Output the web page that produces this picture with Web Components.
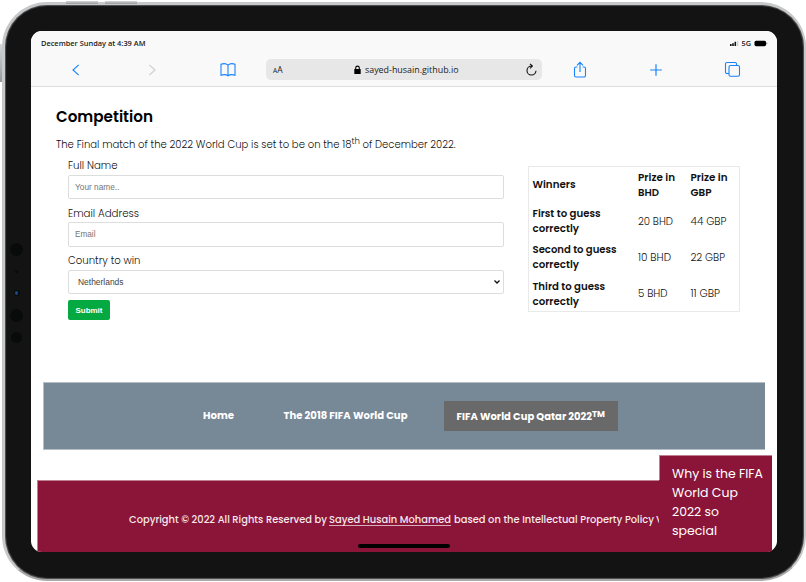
<!DOCTYPE html>
<html lang="en"><head><meta charset="utf-8"><title>Competition</title>
<style>
html,body{margin:0;height:100%;overflow:hidden;background:#fff}
body{font-family:Poppins,Inter,"Open Sans",sans-serif;color:#333}
</style></head><body>
<tablet-frame>
  <browser-bar></browser-bar>
  <competition-page></competition-page>
</tablet-frame>
<script>
const define=(name,html,after)=>customElements.define(name,class extends HTMLElement{
  connectedCallback(){
    if(this.shadowRoot)return;
    const t=document.createElement('template');t.innerHTML=html;
    this.attachShadow({mode:'open'}).append(t.content.cloneNode(true));
    if(after)after(this);
  }
});

/* A single line of text sized, then tracked, to the width given in its w attribute. */
define('fit-text',`<style>:host{display:inline-block;white-space:pre;line-height:inherit}span{display:inline-block}</style><span><slot></slot></span>`,el=>{
  const w=+el.getAttribute('w'),s=el.shadowRoot.querySelector('span');
  requestAnimationFrame(()=>{
    const n=el.textContent.length,size=parseFloat(getComputedStyle(s).fontSize);
    const k=Math.max(.92,Math.min(1.08,w/s.getBoundingClientRect().width));
    s.style.fontSize=size*k+'px';
    if(n>1)s.style.letterSpacing=((w-s.getBoundingClientRect().width)/n)+'px';
    el.style.width=w+'px';
  });
});

define('tablet-frame',`<style>
:host{display:block;position:relative;width:806px;height:582px;overflow:hidden}
.key{position:absolute;background:linear-gradient(#d5d6d8,#97999b)}
.case{box-sizing:border-box;margin:2px 0 0 2px;width:804px;height:579px;border-radius:45px;background:#131313;border:3px solid #c6c8ca;border-right-width:2px;border-bottom-width:2px;border-bottom-color:#aaa;padding:26px 27px 27px 26px;box-shadow:inset 0 0 1px 1px #555}
.screen{width:746px;height:521px;border-radius:11px;background:#fff;overflow:hidden;position:relative;display:flex;flex-direction:column}
.dot{position:absolute;border-radius:50%;background:#090b0b}
.home{position:absolute;left:358px;top:544px;width:92px;height:4px;border-radius:2px;background:#000}
</style>
<i class="key" style="left:66px;top:1px;width:32px;height:3px"></i><i class="key" style="left:105px;top:1px;width:32px;height:3px"></i>
<i class="key" style="left:0;top:44px;width:2px;height:38px"></i>
<div class="case"><div class="screen"><slot></slot></div></div>
<i class="dot" style="left:10px;top:243px;width:13px;height:13px"></i>
<i class="dot" style="left:15px;top:270px;width:3px;height:3px"></i>
<i class="dot" style="left:14px;top:290px;width:6px;height:6px"></i>
<i class="dot" style="left:15px;top:291px;width:3px;height:4px;background:#174a86"></i>
<i class="dot" style="left:10px;top:309px;width:13px;height:13px"></i>
<i class="dot" style="left:11px;top:332px;width:11px;height:11px"></i>
<i class="home"></i>`);

define('browser-bar',`<style>
:host{display:block;height:55px;flex:none;background:#f9f9f9;border-bottom:1px solid #dedede;font-family:"Open Sans","Noto Sans",sans-serif}
.status{display:flex;justify-content:space-between;align-items:center;height:25px;padding:0 9px 0 10px;font-size:7.400px;font-weight:600;color:#222}
.status fit-text{margin-top:-1px}
.right{display:flex;align-items:center;gap:3px}
.tools{display:grid;grid-template-columns:76px 76px 78px 276px 76px 76px 76px;height:27px;align-items:center;padding-left:6px}
.tools>svg{justify-self:center}
svg{display:block;fill:none;stroke:#1683fb;stroke-width:1.1}
.url{box-sizing:border-box;width:276px;height:21px;margin-left:-1px;border-radius:5px;background:#e7e7e7;display:flex;align-items:center;padding:0 4px 0 7px;color:#222;font-size:9px}
.aa{font-size:8.5px;width:81px}.aa small{font-size:6.5px}
.url fit-text{margin-left:4px;flex:1}
</style>
<div class="status"><fit-text w="104.5">December Sunday at 4:39 AM</fit-text>
<div class="right"><svg width="9" height="7" style="stroke:none;fill:#111"><path d="M0 4h1.6v2H0zM2.2 3.2h1.6V6H2.2zM4.5 1.8h1.6V6H4.5z"/><path d="M7 1h1.3v5H7z" fill="#ccc"/></svg><fit-text w="9.5">5G</fit-text><svg width="14" height="7" style="stroke:none;fill:#000"><rect x=".5" y=".8" width="11.6" height="5.4" rx="1.6"/><path d="M12.7 2.5q1.2 1 0 2z"/></svg></div></div>
<div class="tools">
<svg width="10" height="14" style="margin-left:2px"><path d="M7.700 1.800 2 7l5.700 5.200"/></svg>
<svg width="10" height="14" style="stroke:#ccc;margin-left:2px"><path d="M2.300 1.800 8 7l-5.700 5.200"/></svg>
<svg width="18" height="16"><path d="M9 3.200C7.300 1.500 4.500 1.300 2 2.200v11c2.500-.8 5.300-.8 7 .6 1.700-1.400 4.500-1.400 7-.6v-11C13.500 1.300 10.700 1.500 9 3.200v10.600"/></svg>
<div class="url"><span class="aa"><small>A</small>A</span><svg width="7" height="10" style="stroke:#000"><rect x=".3" y="4" width="6.400" height="5" rx=".6" fill="#000" stroke="none"/><path d="M1.700 4.500V2.900a1.800 1.800 0 0 1 3.600 0v1.600"/></svg><fit-text w="93.500">sayed-husain.github.io</fit-text><svg width="13" height="14" style="stroke:#111"><path d="M6.500 3A4.500 4.500 0 1 0 11 7.800M5 .8l2.400 2.300L5 5.300"/></svg></div>
<svg width="14" height="18" style="margin-left:-2px"><path d="M4.300 6H3a1.500 1.500 0 0 0-1.500 1.500v7A1.500 1.500 0 0 0 3 16h8a1.500 1.500 0 0 0 1.500-1.500v-7A1.500 1.500 0 0 0 11 6H9.700M7 11V1.500M4 4.300l3-3 3 3"/></svg>
<svg width="14" height="14" style="margin-left:-2px"><path d="M7 1.200v11.600M1.200 7h11.600" stroke-width="1.200"/></svg>
<svg width="18" height="18"><path d="M12.500 4.500V3A1.500 1.500 0 0 0 11 1.500H3A1.500 1.500 0 0 0 1.500 3v8A1.500 1.500 0 0 0 3 12.500h2"/><rect x="5" y="4.500" width="10.500" height="10.700" rx="1.500"/></svg>
</div>`);

define('entry-form',`<style>
:host{display:flex;flex-direction:column;width:436px}
label{height:17px;line-height:17px;font-size:10.400px;font-weight:300;color:#111}
.box{box-sizing:border-box;border:1px solid #ddd;border-radius:2px;display:flex;align-items:center;justify-content:space-between;padding:1px 2px 0 6px;font:7.900px "Liberation Sans",sans-serif;color:#757575;background:#fff}
button{box-sizing:border-box;margin-top:5px;border:0;padding:0;width:42px;height:20px;border-radius:2px;background:#04aa41;color:#fff;font:bold 8px "Liberation Sans",sans-serif}
</style>
<label><fit-text w="49.500">Full Name</fit-text></label>
<div class="box" style="height:24px;margin:1px 0 6px"><fit-text w="44.500">Your name..</fit-text></div>
<label><fit-text w="71">Email Address</fit-text></label>
<div class="box" style="height:25px;margin-bottom:5px"><fit-text w="20.500">Email</fit-text></div>
<label><fit-text w="72.500">Country to win</fit-text></label>
<div class="box" style="height:25px;margin:1px 0;padding:0 2px 0 9px;color:#444"><fit-text w="45.500">Netherlands</fit-text><svg width="8" height="6" fill="none" stroke="#111" stroke-width="1.300"><path d="m1.500 1.500 2.500 2.500 2.500-2.500"/></svg></div>
<button><fit-text w="27">Submit</fit-text></button>`);

define('prize-table',`<style>
:host{box-sizing:border-box;display:grid;grid-template-columns:105.500px 52.500px 1fr;grid-template-rows:36px 36px 36.500px 36.500px;align-items:center;width:212px;height:146px;border:1px solid #e9e9e9;padding-left:3.500px;font-size:9.900px;line-height:15px;color:#111;font-weight:300}
b{font-weight:600;color:#111;display:flex;flex-direction:column}span{padding-top:1px}.last{padding-top:1px}
</style>
<b><fit-text w="43">Winners</fit-text></b><b><fit-text w="37">Prize in</fit-text><fit-text w="21">BHD</fit-text></b><b><fit-text w="37">Prize in</fit-text><fit-text w="21">GBP</fit-text></b>
<b><fit-text w="68">First to guess</fit-text><fit-text w="46.500">correctly</fit-text></b><span><fit-text w="35">20 BHD</fit-text></span><span><fit-text w="36">44 GBP</fit-text></span>
<b><fit-text w="84">Second to guess</fit-text><fit-text w="46.500">correctly</fit-text></b><span><fit-text w="33">10 BHD</fit-text></span><span><fit-text w="34.500">22 GBP</fit-text></span>
<b class="last"><fit-text w="72.500">Third to guess</fit-text><fit-text w="46.500">correctly</fit-text></b><span><fit-text w="29.500">5 BHD</fit-text></span><span><fit-text w="29.500">11 GBP</fit-text></span>`);

define('site-nav',`<style>
:host{box-sizing:border-box;display:flex;align-items:center;width:722px;height:68px;margin:62px 0 0 12px;background:#778897;border:1px solid #b4bec7;border-right:0;padding-left:159px;color:#fff;font-size:10px;font-weight:700;line-height:14px}
.on{box-sizing:border-box;margin-left:36.500px;width:174px;height:30px;padding:1px 0 0 12.500px;background:#696969;display:flex;align-items:center}
sup{font-size:8.500px;line-height:8px;margin-bottom:5px;vertical-align:0}
</style>
<fit-text w="31">Home</fit-text><fit-text w="124" style="margin-left:49.500px">The 2018 FIFA World Cup</fit-text><div class="on"><fit-text w="135.500">FIFA World Cup Qatar 2022</fit-text><sup><fit-text w="13">TM</fit-text></sup></div>`);

define('site-footer',`<style>
:host{box-sizing:border-box;display:block;flex:none;width:735px;height:76px;margin:30px 0 0 6px;background:#8a1538;border:1px solid #bd7f92;border-bottom:0;color:#f5e9ed;font-size:10px;font-weight:500}
div{display:flex;box-sizing:border-box;padding:31px 0 0 91px;line-height:15px}
a{height:13px;border-bottom:1px solid #d9aebc;margin:0 3px 0 2px}a fit-text{height:13px}
fit-text{flex:none}
</style><div><fit-text w="198">Copyright © 2022 All Rights Reserved by</fit-text><a><fit-text w="122">Sayed Husain Mohamed</fit-text></a><fit-text w="200">based on the Intellectual Property Policy</fit-text><fit-text w="7" style="margin-left:2px">V</fit-text></div>`);

define('promo-popup',`<style>
:host{position:absolute;left:628px;top:424px;box-sizing:border-box;width:113px;height:97px;background:linear-gradient(#bd7f92,#bd7f92) 0 0/100% 1px no-repeat,linear-gradient(#bd7f92,#bd7f92) 0 0/1px 25px no-repeat,#8a1538;color:#fff;font-size:13px;line-height:19px;padding:9px 0 0 13px;display:flex;flex-direction:column}
</style><fit-text w="91">Why is the FIFA</fit-text><fit-text w="66">World Cup</fit-text><fit-text w="47">2022 so</fit-text><fit-text w="45">special</fit-text>`);

define('competition-page',`<style>
:host{display:flex;flex-direction:column;flex:1;min-height:0}
h1{margin:18px 0 0 25px;height:24px;line-height:24px;font-size:15.500px;font-weight:600;color:#000}
p{margin:7px 0 0 25px;height:18px;line-height:18px;font-size:10.400px;font-weight:300;color:#111;display:flex}
sup{line-height:11px;font-size:9px}
.row{display:flex;padding:3px 0 0 37px;gap:24px;height:166px;box-sizing:border-box;flex:none}
prize-table{margin-top:8.500px}
site-nav{flex:none}
</style>
<h1><fit-text w="97">Competition</fit-text></h1>
<p><fit-text w="295.500">The Final match of the 2022 World Cup is set to be on the 18</fit-text><sup><fit-text w="8.500">th</fit-text></sup><fit-text w="93" style="margin-left:2.500px">of December 2022.</fit-text></p>
<div class="row"><entry-form></entry-form><prize-table></prize-table></div>
<site-nav></site-nav><site-footer></site-footer><promo-popup></promo-popup>`);
</script></body></html>
